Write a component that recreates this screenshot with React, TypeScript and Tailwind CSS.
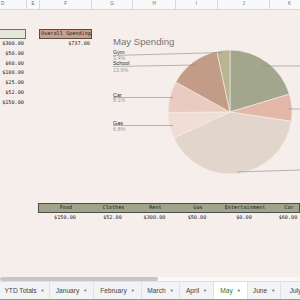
const mono = { fontFamily: '"DejaVu Sans Mono", "Liberation Mono", monospace' };

const columns = [
  { letter: "D", w: "w-[48px]" },
  { letter: "E", w: "w-[13px]" },
  { letter: "F", w: "w-[52px]" },
  { letter: "G", w: "w-[41px]" },
  { letter: "H", w: "w-[43px]" },
  { letter: "I", w: "w-[42px]" },
  { letter: "J", w: "w-[52px]" },
  { letter: "K", w: "w-[40px]" },
];

const leftValues = ["$300.00", "$50.00", "$60.00", "$100.00", "$25.00", "$52.00", "$150.00"];

const tableCols = [
  { name: "Food", value: "$150.00", w: "w-[54px]" },
  { name: "Clothes", value: "$52.00", w: "w-[41px]" },
  { name: "Rent", value: "$300.00", w: "w-[43px]" },
  { name: "Gas", value: "$50.00", w: "w-[42px]" },
  { name: "Entertainment", value: "$0.00", w: "w-[52px]" },
  { name: "Car", value: "$60.00", w: "w-[36px]" },
];

const slices = [
  { name: "Food", amount: 150, color: "#a1a68c" },
  { name: "Clothes", amount: 52, color: "#e3b6a8" },
  { name: "Rent", amount: 300, color: "#e2d6cc" },
  { name: "Gas", amount: 50, color: "#f0ddd6" },
  { name: "Car", amount: 60, color: "#eacbc1" },
  { name: "School", amount: 100, color: "#c29c86" },
  { name: "Gym", amount: 25, color: "#b8b590" },
];

const tabs = [
  { name: "YTD Totals", w: "w-[50px]" },
  { name: "January", w: "w-[44px]" },
  { name: "February", w: "w-[48px]" },
  { name: "March", w: "w-[38px]" },
  { name: "April", w: "w-[34px]" },
  { name: "May", w: "w-[34px]", active: true },
  { name: "June", w: "w-[33px]" },
  { name: "July", w: "w-[30px]" },
];

function PieChart() {
  const cx = 230;
  const cy = 112;
  const r = 62;
  const total = slices.reduce((s, x) => s + x.amount, 0);
  let start = 0;
  const pt = (deg: number) => {
    const a = (deg * Math.PI) / 180;
    return [cx + r * Math.sin(a), cy - r * Math.cos(a)];
  };
  const paths = slices.map((s) => {
    const sweep = (s.amount / total) * 360;
    const [x1, y1] = pt(start);
    const [x2, y2] = pt(start + sweep);
    const large = sweep > 180 ? 1 : 0;
    start += sweep;
    return (
      <path
        key={s.name}
        d={`M${cx},${cy} L${x1},${y1} A${r},${r} 0 ${large} 1 ${x2},${y2} Z`}
        fill={s.color}
        stroke="#f6eeeb"
        strokeWidth={0.6}
      />
    );
  });

  const label = { fontFamily: '"Liberation Sans", Arial, sans-serif' };

  return (
    <svg
      className="absolute top-0 left-0"
      width={300}
      height={267}
      viewBox="0 10 300 267"
    >
      <text x={113} y={44.5} fontSize={9.6} fill="#757575" style={label}>
        May Spending
      </text>
      {paths}
      <g stroke="#8a8a8a" strokeWidth={0.6}>
        <line x1={113} y1={55.5} x2={222} y2={52.5} />
        <line x1={113} y1={66.5} x2={196} y2={65} />
        <line x1={113} y1={97.5} x2={173} y2={97.5} />
        <line x1={113} y1={125.5} x2={173} y2={125.5} />
        <line x1={262} y1={66} x2={300} y2={66} />
        <line x1={289} y1={109} x2={300} y2={109} />
        <line x1={237} y1={172} x2={300} y2={170} />
      </g>
      <g style={label} fontSize={5.4}>
        <text x={113} y={54.3} fill="#2a2a2a">Gym</text>
        <text x={113} y={59.5} fill="#9b9b9b">3.4%</text>
        <text x={113} y={65.3} fill="#2a2a2a">School</text>
        <text x={113} y={71.8} fill="#9b9b9b">13.6%</text>
        <text x={113} y={96.5} fill="#2a2a2a">Car</text>
        <text x={113} y={102} fill="#9b9b9b">8.1%</text>
        <text x={113} y={124.5} fill="#2a2a2a">Gas</text>
        <text x={113} y={130.8} fill="#9b9b9b">6.8%</text>
      </g>
    </svg>
  );
}

export default function App() {
  return (
    <div
      className="w-[300px] h-[300px] flex flex-col overflow-hidden bg-[#f6eeeb]"
      style={{ fontFamily: '"Liberation Sans", Arial, sans-serif' }}
    >
      {/* column letters */}
      <div className="h-[10px] shrink-0 flex bg-[#f8f9fa] border-b border-[#d6d8da] ml-[-21px]">
        {columns.map((c) => (
          <div
            key={c.letter}
            className={`${c.w} shrink-0 border-r border-[#d6d8da] flex items-center justify-center text-[4.5px] text-[#666]`}
          >
            {c.letter}
          </div>
        ))}
      </div>

      {/* sheet body */}
      <div className="flex-1 relative overflow-hidden text-[#222]" style={mono}>
        <div className="h-[193px] flex ml-[-21px] pt-[19px]">
          <div className="w-[47px] shrink-0 flex flex-col">
            <div className="h-[10px] bg-[#e4e7da] border border-[#6e6e6e]" />
            {leftValues.map((v, i) => (
              <div key={i} className="h-[9.8px] leading-[9.8px] text-right pr-[2px] text-[5.2px]">
                {v}
              </div>
            ))}
          </div>
          <div className="w-[13px] shrink-0" />
          <div className="w-[53px] shrink-0 flex flex-col">
            <div className="h-[10px] bg-[#c9a18b] border border-[#5a4a40] flex items-center pl-[1px] text-[5.2px] whitespace-nowrap">
              Overall Spending
            </div>
            <div className="h-[9.8px] leading-[9.8px] text-right pr-[2px] text-[5.2px]">$737.00</div>
          </div>
        </div>

        {/* bottom totals table */}
        <div className="flex flex-col ml-[38px]">
          <div className="h-[10px] flex bg-[#9fa48a] border border-[#4e4e4e]">
            {tableCols.map((c) => (
              <div
                key={c.name}
                className={`${c.w} shrink-0 flex items-center justify-center text-[5.2px] whitespace-nowrap`}
              >
                {c.name}
              </div>
            ))}
          </div>
          <div className="h-[10px] flex">
            {tableCols.map((c) => (
              <div
                key={c.name}
                className={`${c.w} shrink-0 flex items-center justify-center text-[5.2px]`}
              >
                {c.value}
              </div>
            ))}
          </div>
        </div>

        <PieChart />
      </div>

      {/* horizontal scrollbar */}
      <div className="h-[4px] shrink-0 flex bg-[#f8f8f8]">
        <div className="w-[158px] h-full rounded-full bg-[#c6c6c6]" />
      </div>

      {/* sheet tabs */}
      <div className="h-[19px] shrink-0 flex bg-[#f1f3f4] border-t border-[#e0e0e0] border-b border-b-[#9a9a9a]">
        {tabs.map((t) => (
          <div
            key={t.name}
            className={`${t.w} shrink-0 flex items-center justify-center gap-[4px] border-r border-[#e2e2e2] text-[6.6px] whitespace-nowrap ${
              t.active ? "bg-white text-[#188038]" : "text-[#444]"
            }`}
          >
            <span>{t.name}</span>
            {t.name !== "July" && (
              <span className={`text-[4px] ${t.active ? "text-[#188038]" : "text-[#666]"}`}>▼</span>
            )}
          </div>
        ))}
      </div>
    </div>
  );
}
